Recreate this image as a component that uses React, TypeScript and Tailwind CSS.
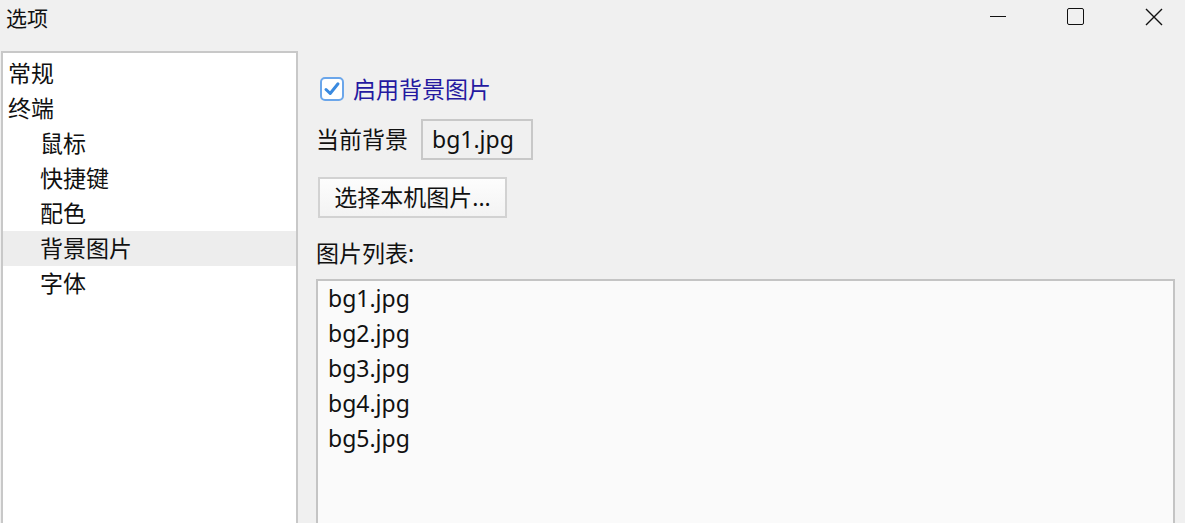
import React from 'react';

const FONT = '"Segoe UI", "Noto Sans", "Noto Sans CJK SC", sans-serif';

const tree = [
  { label: '常规', depth: 0 },
  { label: '终端', depth: 0 },
  { label: '鼠标', depth: 1 },
  { label: '快捷键', depth: 1 },
  { label: '配色', depth: 1 },
  { label: '背景图片', depth: 1, selected: true },
  { label: '字体', depth: 1 },
];

const images = ['bg1.jpg', 'bg2.jpg', 'bg3.jpg', 'bg4.jpg', 'bg5.jpg'];

export default function App() {
  return (
    <div
      className="w-[1185px] h-[523px] overflow-hidden bg-[#f0f0f0] text-[#111] flex flex-col"
      style={{ fontFamily: FONT }}
    >
      {/* Title bar */}
      <div className="h-[51px] flex items-start shrink-0">
        <span className="pl-[6px] pt-[5px] text-[21px] leading-[26px]">选项</span>
        <div className="ml-auto flex items-center gap-[61px] pr-[22px] h-[32px] pt-px">
          <div className="w-[16px] h-px bg-[#111]" />
          <div className="w-[17px] h-[17px] border-[1.5px] border-[#111] rounded-[2px]" />
          <svg width="18" height="18" viewBox="0 0 18 18">
            <path d="M1 1 L17 17 M17 1 L1 17" stroke="#111" strokeWidth="1.4" />
          </svg>
        </div>
      </div>

      <div className="flex flex-1 min-h-0">
        {/* Tree */}
        <div className="ml-px w-[297px] bg-white border-2 border-b-0 border-[#c8c8c8] pt-[3px] shrink-0">
          {tree.map((item) => (
            <div
              key={item.label}
              className={`h-[35px] flex items-center text-[23px] ${item.selected ? 'bg-[#ededed]' : ''} ${item.depth ? 'pl-[37px]' : 'pl-[5px]'}`}
            >
              {item.label}
            </div>
          ))}
        </div>

        {/* Right side */}
        <div className="flex-1 pl-[18px] pr-[10px] flex flex-col">
          <div className="flex items-center gap-[9px] mt-[26px] pl-[4px]">
            <div className="w-[24px] h-[24px] rounded-[5px] border-[2.5px] border-[#6ba6ea] bg-white flex items-center justify-center">
              <svg width="18" height="18" viewBox="0 0 18 18">
                <path d="M3 9.5 L7.2 13.5 L15 3.8" fill="none" stroke="#3a8ae0" strokeWidth="3" strokeLinecap="round" strokeLinejoin="round" />
              </svg>
            </div>
            <span className="text-[23px] leading-[22px] text-[#2419a0]">启用背景图片</span>
          </div>

          <div className="flex items-center mt-[18px]">
            <span className="text-[23px] w-[105px]">当前背景</span>
            <div className="w-[112px] h-[41px] border-2 border-[#c8c8c8] flex items-center pl-[9px] text-[23px]">
              bg1.jpg
            </div>
          </div>

          <button className="mt-[17px] ml-[2px] w-[189px] h-[41px] border-2 border-[#d2d2d2] bg-gradient-to-b from-[#fdfdfd] to-[#f3f3f3] text-[23px] leading-none flex items-center justify-center">
            选择本机图片...
          </button>

          <div className="mt-[20px] text-[23px] leading-[30px]">图片列表:</div>

          <div className="mt-[11px] flex-1 bg-[#fafafa] border-2 border-b-0 border-[#c4c4c4] pl-[10px]">
            {images.map((img) => (
              <div key={img} className="h-[35px] flex items-center text-[23px]">
                {img}
              </div>
            ))}
          </div>
        </div>
      </div>
    </div>
  );
}
